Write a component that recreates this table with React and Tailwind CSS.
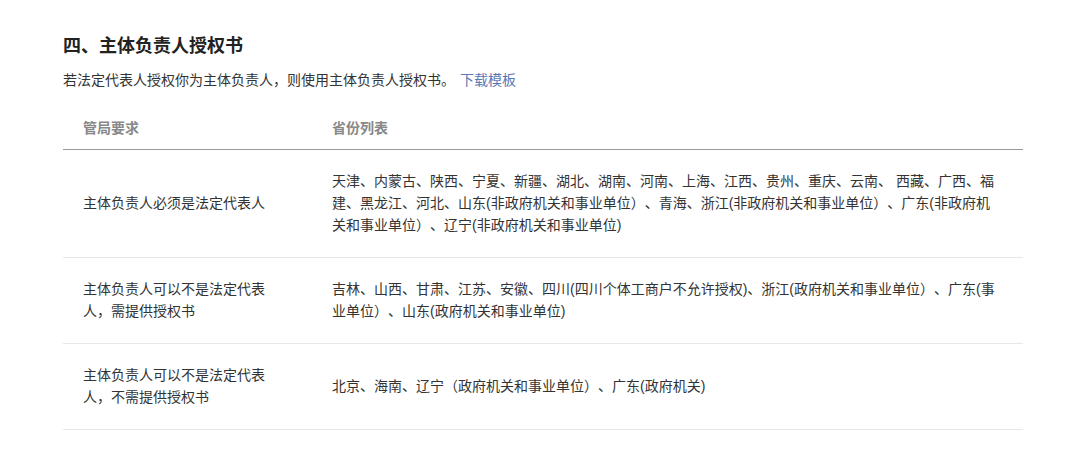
const rows = [
  {
    req: '主体负责人必须是法定代表人',
    provinces:
      '天津、内蒙古、陕西、宁夏、新疆、湖北、湖南、河南、上海、江西、贵州、重庆、云南、 西藏、广西、福建、黑龙江、河北、山东(非政府机关和事业单位）、青海、浙江(非政府机关和事业单位）、广东(非政府机关和事业单位）、辽宁(非政府机关和事业单位)',
  },
  {
    req: '主体负责人可以不是法定代表人，需提供授权书',
    provinces:
      '吉林、山西、甘肃、江苏、安徽、四川(四川个体工商户不允许授权)、浙江(政府机关和事业单位）、广东(事业单位）、山东(政府机关和事业单位)',
  },
  {
    req: '主体负责人可以不是法定代表人，不需提供授权书',
    provinces: '北京、海南、辽宁（政府机关和事业单位）、广东(政府机关)',
  },
];

export default function App() {
  return (
    <div className="min-h-screen bg-white px-[63px] pt-[33px] font-['Liberation_Sans','Noto_Sans_CJK_SC',sans-serif] text-[#333] [text-spacing-trim:space-all]">
      <h2 className="text-[18px] font-bold leading-[26px] text-[#222]">四、主体负责人授权书</h2>
      <p className="mt-[10px] text-[14px] leading-[22px] text-[#333]">
        若法定代表人授权你为主体负责人，则使用主体负责人授权书。
        <a href="#" className="ml-[5px] text-[#5a78b5]">下载模板</a>
      </p>

      <table className="mt-[16px] w-[960px] table-fixed border-collapse text-[14px] leading-[22px]">
        <thead>
          <tr className="border-b border-[#999]">
            <th className="w-[249px] py-[10px] pl-[20px] text-left font-semibold text-[#888]">管局要求</th>
            <th className="py-[10px] pl-[20px] text-left font-semibold text-[#888]">省份列表</th>
          </tr>
        </thead>
        <tbody>
          {rows.map((r) => (
            <tr key={r.req} className="border-b border-[#e8e8e8]">
              <td className="pt-[20px] pb-[21px] pl-[20px] align-middle">
                <div className="w-[190px]">{r.req}</div>
              </td>
              <td className="pt-[20px] pb-[21px] pl-[20px] pr-[20px] align-middle">{r.provinces}</td>
            </tr>
          ))}
        </tbody>
      </table>
    </div>
  );
}
